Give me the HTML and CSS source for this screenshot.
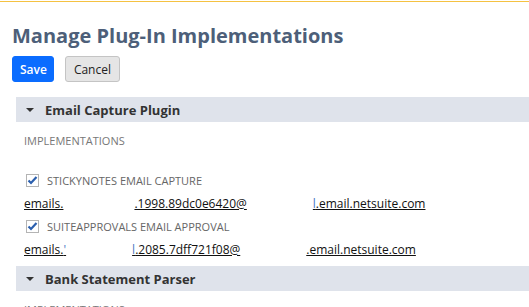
FILE: index.html
```html
<!DOCTYPE html>
<html lang="en">
<head>
  <meta charset="UTF-8" />
  <title>Manage Plug-In Implementations</title>
  <link rel="stylesheet" href="styles.css">
</head>
<body>
  <div class="topline"></div>
  <main class="page">
    <h1>Manage Plug-In Implementations</h1>
    <div class="actions">
      <button class="btn btn-primary">Save</button>
      <button class="btn">Cancel</button>
    </div>

    <section class="plugin">
      <div class="plugin-head">
        <span class="caret"></span>
        <h2>Email Capture Plugin</h2>
      </div>
      <div class="plugin-body">
        <p class="label">Implementations</p>
        <div class="impl">
          <label class="check">
            <span class="box"><svg viewBox="0 0 13 13" width="13" height="13"><path d="M2.5 6.5 L5 9 L10.5 3" fill="none" stroke="#2b5fae" stroke-width="2.2"/></svg></span>
            StickyNotes Email Capture
          </label>
          <div class="addr">
            <a href="#">emails.</a>
            <a href="#" class="mid-a">.1998.89dc0e6420@</a>
            <a href="#" class="end-a"><span class="stub">l</span>.email.netsuite.com</a>
          </div>
        </div>
        <div class="impl">
          <label class="check">
            <span class="box"><svg viewBox="0 0 13 13" width="13" height="13"><path d="M2.5 6.5 L5 9 L10.5 3" fill="none" stroke="#2b5fae" stroke-width="2.2"/></svg></span>
            SuiteApprovals Email Approval
          </label>
          <div class="addr">
            <a href="#">emails.<span class="stub">'</span></a>
            <a href="#" class="mid-b"><span class="stub">l</span>.2085.7dff721f08@</a>
            <a href="#" class="end-b">.email.netsuite.com</a>
          </div>
        </div>
      </div>
    </section>

    <section class="plugin">
      <div class="plugin-head">
        <span class="caret"></span>
        <h2>Bank Statement Parser</h2>
      </div>
      <div class="plugin-body">
        <p class="label">Implementations</p>
      </div>
    </section>
  </main>
</body>
</html>
```

FILE: styles.css
```css
body {
  font-family: 'Open Sans', sans-serif;
  margin: 0;
  padding: 0;
  background: #fff;
  color: #333;
  overflow: hidden;
}
.topline {
  height: 1px;
  margin-top: 1px;
  background: #f5c242;
}
.page {
  padding: 0 0 0 12px;
}
h1 {
  margin: 19px 0 0;
  font-size: 20px;
  line-height: 30px;
  font-weight: bold;
  color: #4d5f79;
}
.actions {
  display: flex;
  gap: 11px;
  margin-top: 5px;
}
.btn {
  font-family: 'Open Sans', sans-serif;
  font-size: 12px;
  height: 26px;
  padding: 0 8px;
  border: 1px solid #c4c4c4;
  border-radius: 3px;
  background: #e5e5e5;
  color: #222;
}
.btn-primary {
  padding: 0 6px 0 7px;
  background: #0a6cff;
  border-color: #0a6cff;
  color: #fff;
  font-weight: 600;
}
.plugin {
  margin-left: 4px;
}
.plugin-head {
  display: flex;
  align-items: center;
  height: 25px;
  background: #dfe3eb;
  margin-top: 15px;
}
.plugin + .plugin .plugin-head {
  margin-top: 5px;
}
.caret {
  width: 0;
  height: 0;
  margin: 0 11px 0 10px;
  border-left: 4px solid transparent;
  border-right: 4px solid transparent;
  border-top: 4px solid #333;
}
h2 {
  margin: 0;
  font-size: 13px;
  font-weight: bold;
  color: #333;
}
.plugin-body {
  padding: 0 0 0 8px;
}
.label {
  margin: 11px 0 0;
  font-size: 11px;
  text-transform: uppercase;
  color: #777;
}
.impl:first-of-type {
  margin-top: 21px;
}
.check {
  display: flex;
  align-items: center;
  gap: 8px;
  font-size: 11px;
  text-transform: uppercase;
  color: #666;
  height: 22px;
}
.box {
  display: block;
  width: 13px;
  height: 13px;
  margin-left: 2px;
  border: 1px solid #b4b4b4;
  box-sizing: border-box;
  background: #fff;
}
.box svg {
  display: block;
  margin: -1px 0 0 -1px;
}
.addr {
  display: flex;
  font-size: 12px;
  height: 24px;
  align-items: center;
}
.addr a {
  color: #111;
}
.stub {
  color: #4a79c4;
}
.mid-a { margin-left: 71px; }
.end-a { margin-left: 66px; }
.mid-b { margin-left: 66px; }
.end-b { margin-left: 66px; }
```
